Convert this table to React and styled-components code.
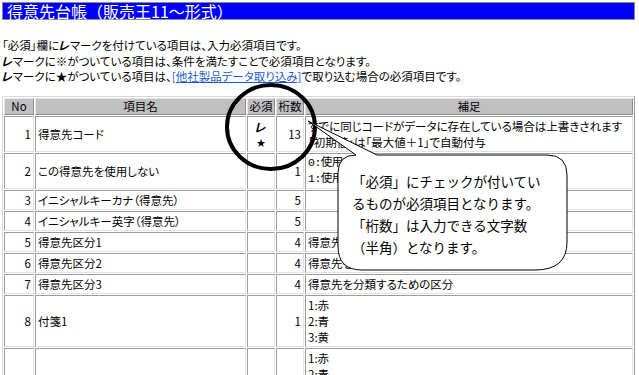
import React from 'react'
import styled, { createGlobalStyle } from 'styled-components'

const GlobalStyle = createGlobalStyle`
  html, body {
    margin: 0;
    padding: 0;
    background: #fff;
    overflow: hidden;
  }
  body {
    font-family: "Noto Sans CJK JP", "Noto Sans", sans-serif;
    color: #000;
  }
`

const Page = styled.div`
  position: relative;
  width: 639px;
  height: 375px;
  overflow: hidden;
  padding: 2px 4px 0 2px;
  box-sizing: border-box;
`

const TitleBar = styled.h1`
  margin: 0;
  height: 18px;
  box-sizing: border-box;
  border: 1px solid #8a8a8a;
  background: #0000ff;
  color: #fff;
  font-size: 16px;
  font-weight: normal;
  line-height: 16px;
  padding-left: 4px;
  white-space: nowrap;
`

const Notes = styled.div`
  margin: 18px 0 11px 0;
  font-size: 11.5px;
  line-height: 15.5px;
  font-feature-settings: "palt";
  white-space: nowrap;
`

const Check = styled.span`
  display: inline-block;
  font-weight: bold;
  transform: skewX(-14deg);
`

const Link = styled.a`
  color: #1e5bc6;
  text-decoration: underline;
`

const Table = styled.table`
  width: 633px;
  table-layout: fixed;
  border-collapse: separate;
  border-spacing: 1px;
  border: 1px solid;
  border-color: #d8d8d8 #9a9a9a #9a9a9a #d8d8d8;
  font-size: 11.5px;
  font-feature-settings: "palt";
`

const Th = styled.th`
  background: #c0c0c0;
  font-weight: normal;
  height: 15px;
  line-height: 15px;
  padding: 0 1px;
  border: 1px solid;
  border-color: #e6e6e6 #8c8c8c #8c8c8c #e6e6e6;
  text-align: center;
  white-space: nowrap;
  overflow: hidden;
`

const Td = styled.td`
  padding: 1px 2px;
  line-height: 16px;
  border: 1px solid;
  border-color: #9c9c9c #e2e2e2 #e2e2e2 #9c9c9c;
  text-align: ${({ $align }) => $align || 'left'};
  vertical-align: middle;
  white-space: nowrap;
  overflow: hidden;
`

const NoteLine = styled.div`
  font-family: ${({ $mono }) => ($mono ? '"Liberation Mono", "Noto Sans CJK JP", monospace' : 'inherit')};
  letter-spacing: ${({ $mono }) => ($mono ? '-0.5px' : '0')};
`

const ReqMark = styled.div`
  text-align: center;
  font-weight: bold;
  font-size: 12px;
  line-height: 17px;
  transform: skewX(-14deg);
`

const Star = styled.div`
  text-align: center;
  font-size: 9px;
  line-height: 15px;
`

const Overlay = styled.svg`
  position: absolute;
  left: 0;
  top: 0;
  pointer-events: none;
`

const CalloutText = styled.div`
  position: absolute;
  left: 352px;
  top: 170px;
  font-size: 13.5px;
  line-height: 22px;
  white-space: nowrap;
  color: #000;
`

const rows = [
  {
    no: 1,
    name: '得意先コード',
    req: true,
    digits: 13,
    note: ['すでに同じコードがデータに存在している場合は上書きされます', '「初期値」は「最大値＋1」で自動付与'],
  },
  { no: 2, name: 'この得意先を使用しない', digits: 1, note: ['0:使用する', '1:使用しない'], mono: true },
  { no: 3, name: 'イニシャルキーカナ（得意先）', digits: 5, note: [] },
  { no: 4, name: 'イニシャルキー英字（得意先）', digits: 5, note: [] },
  { no: 5, name: '得意先区分1', digits: 4, note: ['得意先を分類するための区分'] },
  { no: 6, name: '得意先区分2', digits: 4, note: ['得意先を分類するための区分'] },
  { no: 7, name: '得意先区分3', digits: 4, note: ['得意先を分類するための区分'] },
  { no: 8, name: '付箋1', digits: 1, note: ['1:赤', '2:青', '3:黄'] },
  { no: '', name: '', digits: '', note: ['1:赤', '2:青', '3:黄'] },
]

export default function App() {
  return (
    <>
      <GlobalStyle />
      <Page>
        <TitleBar>得意先台帳（販売王11～形式）</TitleBar>
        <Notes>
          <div>「必須」欄に<Check>レ</Check>マークを付けている項目は、入力必須項目です。</div>
          <div><Check>レ</Check>マークに※がついている項目は、条件を満たすことで必須項目となります。</div>
          <div>
            <Check>レ</Check>マークに★がついている項目は、<Link href="#">[他社製品データ取り込み]</Link>で取り込む場合の必須項目です。
          </div>
        </Notes>
        <Table>
          <colgroup>
            <col style={{ width: 30 }} />
            <col style={{ width: 211 }} />
            <col style={{ width: 28 }} />
            <col style={{ width: 28 }} />
            <col />
          </colgroup>
          <thead>
            <tr>
              <Th>No</Th>
              <Th>項目名</Th>
              <Th>必須</Th>
              <Th>桁数</Th>
              <Th>補足</Th>
            </tr>
          </thead>
          <tbody>
            {rows.map((r, i) => (
              <tr key={i}>
                <Td $align="right">{r.no}</Td>
                <Td>{r.name}</Td>
                <Td $align="center">
                  {r.req && (
                    <>
                      <ReqMark>レ</ReqMark>
                      <Star>★</Star>
                    </>
                  )}
                </Td>
                <Td $align="right">{r.digits}</Td>
                <Td>
                  {r.note.length ? r.note.map((n) => <NoteLine key={n} $mono={r.mono}>{n}</NoteLine>) : '\u00a0'}
                </Td>
              </tr>
            ))}
          </tbody>
        </Table>

        <Overlay width="639" height="375" viewBox="0 0 639 375">
          <ellipse cx="271" cy="127" rx="44" ry="42" fill="none" stroke="#000" strokeWidth="4" />
          <path
            d="M 338 173 Q 338 155 356 155 L 308 121 L 377 155 L 547 155 Q 567 155 567 175 L 567 242 Q 567 270 535 270 L 362 270 Q 338 270 338 246 Z"
            fill="#fff"
            stroke="#000"
            strokeWidth="1"
          />
        </Overlay>
        <CalloutText>
          <div>「必須」にチェックが付いてい</div>
          <div>るものが必須項目となります。</div>
          <div>「桁数」は入力できる文字数</div>
          <div>（半角）となります。</div>
        </CalloutText>
      </Page>
    </>
  )
}
